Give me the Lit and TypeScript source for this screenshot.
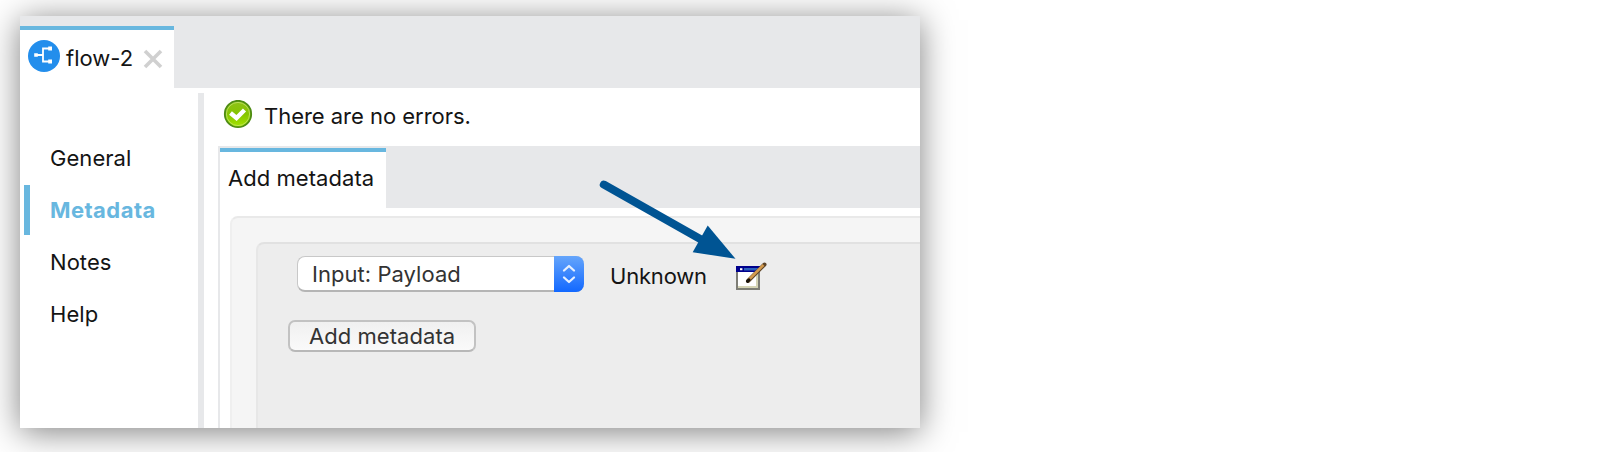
import { LitElement, html, css } from "lit";
import { customElement, state } from "lit/decorators.js";

@customElement("app-root")
export class AppRoot extends LitElement {
  @state() private active = "Metadata";
  private readonly sections = ["General", "Metadata", "Notes", "Help"];

  static styles = css`
    :host {
      display: block;
      box-sizing: border-box;
      height: 452px;
      padding: 16px 0 0 20px;
      overflow: hidden;
      background: #fff;
      color: #141414;
      font: 22px/30px Inter, "Liberation Sans", sans-serif;
      white-space: nowrap;
    }
    * { box-sizing: border-box; }
    svg { display: block; flex: none; }
    .window {
      position: relative;
      width: 900px;
      height: 412px;
      display: flex;
      flex-direction: column;
      background: #fff;
      box-shadow: 0 4px 32px rgba(0, 0, 0, 0.5);
    }
    .tabs { height: 72px; padding-top: 10px; background: #e7e8ea; flex: none; }
    .tab {
      width: 154px;
      height: 62px;
      border-top: 4px solid #68b7df;
      background: #fff;
      display: flex;
      align-items: flex-start;
      padding: 10px 0 0 8px;
    }
    .tab-name { margin: 3px 0 0 6px; width: 69px; letter-spacing: 0; }
    .close { margin: 9px 0 0 8px; }
    .body { flex: 1; display: flex; min-height: 0; }
    .side {
      width: 178px;
      padding: 45px 0 0 4px;
      display: flex;
      flex-direction: column;
      gap: 2px;
    }
    .item {
      height: 50px;
      border-left: 6px solid transparent;
      padding-left: 20px;
      line-height: 50px;
      letter-spacing: 0.05px;
    }
    .item.on { border-color: #68b7df; color: #68b7df; font-weight: 700; letter-spacing: 0.45px; }
    .divider { width: 6px; margin-top: 5px; background: #e7e8ea; }
    .main { flex: 1; min-width: 0; padding-left: 14px; display: flex; flex-direction: column; }
    .status { height: 58px; padding: 12px 0 0 5px; display: flex; gap: 11px; flex: none; }
    .status span { margin-top: 1px; letter-spacing: -0.03px; }
    .sheet { flex: 1; border-left: 2px solid #e7e8ea; display: flex; flex-direction: column; min-height: 0; }
    .subtabs { height: 62px; padding-top: 2px; background: #e7e8ea; flex: none; }
    .subtab {
      width: 166px;
      height: 60px;
      border-top: 4px solid #68b7df;
      background: #fff;
      padding: 11px 0 0 8px;
      letter-spacing: 0.05px;
    }
    .outer {
      flex: 1;
      margin: 8px 0 0 10px;
      padding: 24px 0 0 24px;
      background: #f5f5f5;
      border: 2px solid #e9e9e9;
      border-width: 2px 0 0 2px;
      border-left-color: #efefef;
      border-radius: 8px 0 0 0;
      min-height: 0;
      display: flex;
    }
    .inner {
      flex: 1;
      background: #ededed;
      border: 2px solid #e1e1e1;
      border-left-color: #e7e7e7;
      border-width: 2px 0 0 2px;
      border-radius: 8px 0 0 0;
      padding: 12px 0 0 30px;
    }
    .row { display: flex; height: 37px; padding-left: 9px; }
    .select {
      width: 287px;
      height: 36px;
      display: flex;
      border-radius: 8px;
      background: #fff;
      border: 1px solid #c8c8c8;
      border-right: 0;
      border-bottom: 2px solid #b5b5b5;
      color: #333;
    }
    .value { flex: 1; padding: 2px 0 0 14px; letter-spacing: 0.04px; }
    .knob {
      width: 30px;
      height: 36px;
      margin-top: -1px;
      border-radius: 0 8px 8px 0;
      background: linear-gradient(#65a5fb, #1268ff);
    }
    .type { margin: 5px 0 0 26px; width: 97px; letter-spacing: -0.2px; }
    .edit { margin-top: 5px; margin-left: 29px; }
    .add {
      margin-top: 27px;
      width: 188px;
      height: 32px;
      border: 2px solid #c2c2c2;
      border-bottom-color: #b8b8b8;
      border-radius: 7px;
      background: linear-gradient(#f0f0f0, #fafafa);
      color: #333;
      padding-left: 19px;
      line-height: 28px;
      letter-spacing: 0.05px;
    }
    .pointer { position: absolute; left: 570px; top: 160px; }
  `;

  render() {
    return html`
      <div class="window">
        <div class="tabs">
          <div class="tab">
            <svg width="32" height="32" viewBox="0 0 32 32">
              <circle cx="16" cy="16" r="16" fill="#238eec" />
              <g fill="none" stroke="#fff" stroke-width="1.8">
                <path d="M8 15H14.5M22 8.5H15V21.5H22" />
              </g>
              <path fill="#fff" d="M6.2 13.2h3.6v3.6H6.2zM20.2 6.5H24v4h-3.8zM20.2 19.4H24v4h-3.8z" />
            </svg>
            <span class="tab-name">flow-2</span>
            <svg class="close" width="20" height="20" viewBox="0 0 20 20">
              <path d="M2 2L18 18M18 2L2 18" stroke="#d0d0d0" stroke-width="3.6" />
            </svg>
          </div>
        </div>
        <div class="body">
          <div class="side">
            ${this.sections.map(
              (s) => html`<div class="item ${s === this.active ? "on" : ""}" @click=${() => (this.active = s)}>${s}</div>`
            )}
          </div>
          <div class="divider"></div>
          <div class="main">
            <div class="status">
              <svg width="30" height="30" viewBox="0 0 30 30">
                <defs>
                  <linearGradient id="g" x2="0" y2="1">
                    <stop offset="0" stop-color="#8fc31a" />
                    <stop offset=".5" stop-color="#85c400" />
                    <stop offset="1" stop-color="#a5e500" />
                  </linearGradient>
                </defs>
                <circle cx="15" cy="14" r="13.2" fill="url(#g)" stroke="#4e8c14" stroke-width="1.8" />
                <circle cx="15" cy="14" r="11.6" fill="none" stroke="#c4e36e" stroke-width="1" opacity=".8" />
                <path d="M7.5 13L13.5 18L21.5 10" fill="none" stroke="#fff" stroke-width="4.4" />
              </svg>
              <span>There are no errors.</span>
            </div>
            <div class="sheet">
              <div class="subtabs"><div class="subtab">Add metadata</div></div>
              <div class="outer">
                <div class="inner">
                  <div class="row">
                    <div class="select">
                      <span class="value">Input: Payload</span>
                      <svg class="knob" viewBox="0 0 30 36">
                        <path d="M10 14.5L15 10L20 14.5M10 21.5L15 26L20 21.5" fill="none" stroke="#e6f0ff" stroke-width="2.3" stroke-linecap="round" stroke-linejoin="round" />
                      </svg>
                    </div>
                    <span class="type">Unknown</span>
                    <svg class="edit" width="32" height="30" viewBox="0 0 32 30">
                      <path fill="#7d7d75" d="M0 5H24V29H0z" />
                      <path fill="#fff" d="M2 11H20V25H2z" />
                      <path fill="#d5d4b5" d="M20 11H22V27H2V25H20z" />
                      <path fill="#00008c" d="M0 5H24V11H0z" />
                      <path fill="#2c62bd" d="M8 7H22V9.5H8z" />
                      <path fill="#fff" d="M4 7.2h2.4v2H4z" />
                      <path d="M12 20L28.5 3.5" stroke="#5d4529" stroke-width="4" stroke-linecap="round" />
                      <path d="M13 18.5L27.5 4" stroke="#d49b4e" stroke-width="2.6" />
                      <path d="M11.5 20.3L13 18.8" stroke="#16110a" stroke-width="3" stroke-linecap="round" />
                    </svg>
                  </div>
                  <div class="add">Add metadata</div>
                </div>
              </div>
            </div>
          </div>
        </div>
        <svg class="pointer" width="160" height="90" viewBox="590 176 160 90">
          <path d="M603.8 184.6L702 240" stroke="#005493" stroke-width="8" stroke-linecap="round" />
          <path d="M735.5 258.8L707.7 225.5L692.7 252.2Z" fill="#005493" />
        </svg>
      </div>
    `;
  }
}
